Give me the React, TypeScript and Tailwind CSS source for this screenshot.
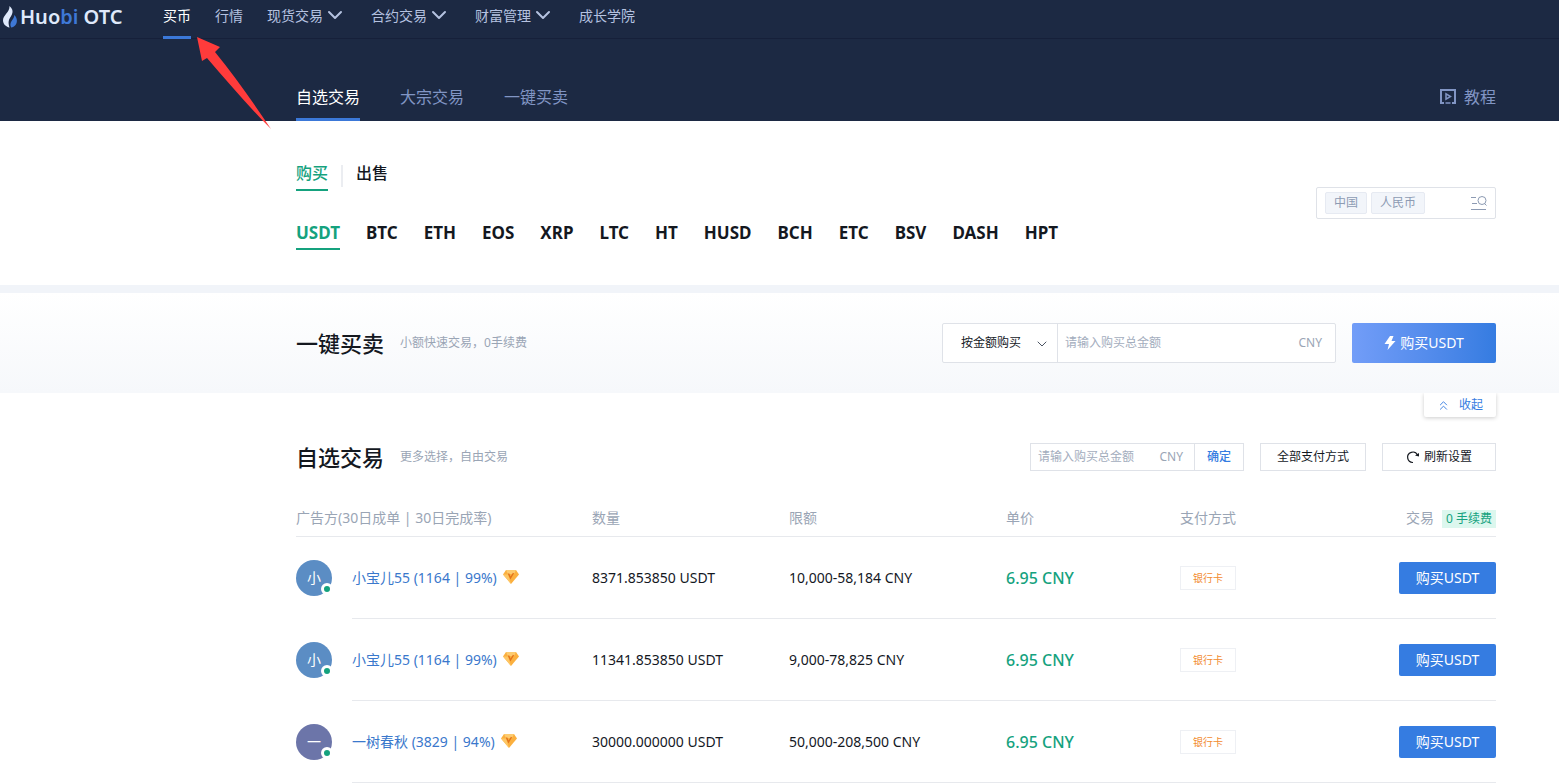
import { ChevronDown, ChevronsUp } from "lucide-react"

const mainNav = [
  { label: "买币", active: true },
  { label: "行情" },
  { label: "现货交易", menu: true },
  { label: "合约交易", menu: true },
  { label: "财富管理", menu: true },
  { label: "成长学院" },
]

const coins = ["USDT", "BTC", "ETH", "EOS", "XRP", "LTC", "HT", "HUSD", "BCH", "ETC", "BSV", "DASH", "HPT"]

const offers = [
  { id: 1, initial: "小", color: "bg-[#5b8dc4]", name: "小宝儿55 (1164 | 99%)", amount: "8371.853850 USDT", limit: "10,000-58,184 CNY", price: "6.95 CNY" },
  { id: 2, initial: "小", color: "bg-[#5b8dc4]", name: "小宝儿55 (1164 | 99%)", amount: "11341.853850 USDT", limit: "9,000-78,825 CNY", price: "6.95 CNY" },
  { id: 3, initial: "一", color: "bg-[#6c75a9]", name: "一树春秋 (3829 | 94%)", amount: "30000.000000 USDT", limit: "50,000-208,500 CNY", price: "6.95 CNY" },
]

const Logo = () => (
  <a href="#" className="flex w-[163px] items-center gap-[3px] pb-1 pl-[3px]" aria-label="Huobi OTC">
    <svg width="14" height="22" viewBox="0 0 14 22" aria-hidden="true">
      <path d="M6.500 0C9.500 2.500 10.300 5.200 9 8.200 7.800 11 5.800 12.800 5.600 16c-.1 2.200.4 4.200 1 5.600C2.600 20.800 0 18 0 14.300 0 9 6.800 6.500 6.500 0Z" fill="#dfe9fb" />
      <path d="M11.300 9c1.700 1.600 2.600 3.600 2.600 5.700 0 3.500-2.200 6.100-5.700 6.900-1.300-2.500-1-4.900.7-7.200 1.300-1.700 2.400-3.200 2.400-5.400Z" fill="#3e78d6" />
    </svg>
    <span className="text-xl leading-6 font-semibold whitespace-nowrap text-[#dfe9fb]">
      Huo<span className="text-[#3e78d6]">bi</span> OTC
    </span>
  </a>
)

const Header = () => (
  <header className="bg-[#1c2943]">
    <div className="flex h-[39px] border-b border-[#16203a]">
      <Logo />
      <nav className="flex gap-6 text-sm leading-8 text-[#b5c2e0]">
        {mainNav.map((item) => (
          <a
            key={item.label}
            href="#"
            className={item.active ? "h-[39px] border-b-3 border-[#3b78d8] text-white" : "flex"}
          >
            {item.label}
            {item.menu && <ChevronDown size={24} className="mt-[3px]" />}
          </a>
        ))}
      </nav>
    </div>
    <div className="flex h-[82px] items-end justify-between pr-[63px] pl-[296px] text-base leading-6 text-[#8195c4]">
      <nav className="flex gap-10">
        <a href="#" className="border-b-3 border-[#3b78d8] pb-[9px] text-white">自选交易</a>
        <a href="#" className="pb-3">大宗交易</a>
        <a href="#" className="pb-3">一键买卖</a>
      </nav>
      <a href="#" className="flex items-center gap-2 pb-3">
        <svg width="16" height="16" viewBox="0 0 16 16" fill="none" aria-hidden="true">
          <path d="M4 14H1V1h14v13h-3" stroke="currentColor" strokeWidth="2" />
          <path d="M5.500 14h5" stroke="currentColor" strokeWidth="1.500" />
          <path d="M6 4.800v5.400L10.500 7.500Z" stroke="currentColor" strokeWidth="1.500" />
        </svg>
        教程
      </a>
    </div>
  </header>
)

const CoinPicker = () => (
  <section className="flex h-[164px] items-start justify-between pt-10 pr-[63px] pl-[296px]">
    <div className="flex flex-col gap-[30px]">
      <div className="flex items-start text-base leading-6 font-medium">
        <button className="border-b-2 border-[#15a27e] pb-1 text-[#15a27e]">购买</button>
        <span className="mx-[13px] mt-1 h-[22px] w-0.5 bg-[#ebedf1]" />
        <button>出售</button>
      </div>
      <div className="flex gap-[26px] text-[17px] leading-6 font-bold">
        {coins.map((coin, i) => (
          <button key={coin} className={i === 0 ? "border-b-2 border-[#15a27e] pb-[3px] text-[#15a27e]" : "pb-[5px]"}>
            {coin}
          </button>
        ))}
      </div>
    </div>
    <button className="mt-[26px] flex h-8 w-[180px] items-center gap-1 rounded-xs border border-[#dfe2e8] px-2 text-xs text-[#8d9bb3]">
      <span className="rounded-xs border border-[#e6eaf2] bg-[#f2f5fa] px-2 leading-5">中国</span>
      <span className="rounded-xs border border-[#e6eaf2] bg-[#f2f5fa] px-2 leading-5">人民币</span>
      <svg width="16" height="16" viewBox="0 0 16 16" fill="none" stroke="#8d9bb3" className="ml-auto" aria-hidden="true">
        <path d="M0 2.500h5M1 8.500h5M0 14.500h15M13.500 8.500l2 2" />
        <circle cx="11" cy="5.500" r="4" />
      </svg>
    </button>
  </section>
)

const QuickTrade = () => (
  <section className="flex h-[108px] items-center justify-between border-t-8 border-[#f1f4f9] bg-linear-to-b from-white to-[#f6f8fb] pr-[63px] pl-[296px]">
    <div className="flex items-center gap-4">
      <h2 className="text-[22px] leading-8 font-medium">一键买卖</h2>
      <span className="text-xs text-[#9aa5b5]">小额快速交易，0手续费</span>
    </div>
    <div className="flex items-center gap-4 text-xs">
      <div className="flex h-10 w-[394px] rounded-xs border border-[#dfe2e8] bg-white">
        <div className="relative flex w-[115px] border-r border-[#dfe2e8]">
          <select aria-label="购买方式" className="w-full appearance-none bg-transparent pl-[18px] outline-none">
            <option>按金额购买</option>
          </select>
          <ChevronDown size={16} strokeWidth={1.5} className="pointer-events-none absolute top-3 right-[7px] text-[#4c5563]" />
        </div>
        <input aria-label="购买总金额" placeholder="请输入购买总金额" className="min-w-0 flex-1 px-[7px] outline-none placeholder:text-[#a3adbd]" />
        <span className="self-center pr-[13px] text-[#9aa5b5]">CNY</span>
      </div>
      <button className="flex h-10 w-36 items-center justify-center gap-1 rounded-xs bg-linear-to-r from-[#729df8] to-[#357ce1] text-sm text-white">
        <svg width="12" height="14" viewBox="0 0 12 14" fill="currentColor" aria-hidden="true">
          <path d="M6 0 .5 8H5l-1.500 6L11.500 5H7.500L9.500 0Z" />
        </svg>
        购买USDT
      </button>
    </div>
  </section>
)

const VipBadge = () => (
  <svg width="16" height="14" viewBox="0 0 16 14" className="mb-0.5" aria-label="V">
    <path d="M3 0h10l3 4.500L8 14 0 4.500Z" fill="#fbb03f" />
    <path d="M3 0h10L11 4H5Z" fill="#fdcb70" />
    <path d="M0 4.500h5L8 14Z" fill="#fdc767" />
    <path d="M5.500 3.500 7.500 8 10.500 3" fill="none" stroke="#e2731c" strokeWidth="1.400" />
  </svg>
)

const Offers = () => (
  <section className="pr-[63px] pl-[296px]">
    <div className="flex justify-end">
      <button className="flex h-6 w-[72px] items-center gap-2 rounded-b-xs bg-white pl-3 text-xs text-[#357ce1] shadow-[0_1px_4px_rgba(0,0,0,0.2)] [clip-path:inset(0_-6px_-6px_-6px)]">
        <ChevronsUp size={15} strokeWidth={1.5} />
        收起
      </button>
    </div>
    <div className="mt-6 flex h-8 items-center justify-between">
      <div className="flex items-center gap-4">
        <h2 className="text-[22px] leading-8 font-medium">自选交易</h2>
        <span className="text-xs text-[#9aa5b5]">更多选择，自由交易</span>
      </div>
      <div className="flex gap-4 text-xs">
        <div className="flex h-7 w-[214px] items-stretch border border-[#dfe2e8]">
          <input aria-label="筛选金额" placeholder="请输入购买总金额" className="min-w-0 flex-1 px-[7px] outline-none placeholder:text-[#a3adbd]" />
          <span className="self-center pr-[11px] text-[#9aa5b5]">CNY</span>
          <button className="w-[49px] border-l border-[#dfe2e8] font-medium text-[#357ce1]">确定</button>
        </div>
        <button className="h-7 w-[106px] border border-[#dfe2e8]">全部支付方式</button>
        <button className="flex h-7 w-[114px] items-center justify-center gap-1 border border-[#dfe2e8]">
          <svg width="14" height="14" viewBox="0 0 14 14" fill="none" stroke="currentColor" aria-hidden="true">
            <path d="M7 12.500A5.200 5.200 0 1 1 11.500 5" strokeWidth="1.200" />
            <path d="M9 5.500 13 3v3.500Z" fill="currentColor" stroke="none" />
          </svg>
          刷新设置
        </button>
      </div>
    </div>
    <table className="mt-[27px] w-full table-fixed text-left text-sm">
      <colgroup>
        <col className="w-14" />
        <col className="w-60" />
        <col className="w-[197px]" />
        <col className="w-[217px]" />
        <col className="w-[174px]" />
        <col />
      </colgroup>
      <thead>
        <tr className="h-9 border-b border-[#e7e9ed] text-[#9aa5b5] *:font-normal">
          <th colSpan={2}>广告方(30日成单 | 30日完成率)</th>
          <th>数量</th>
          <th>限额</th>
          <th>单价</th>
          <th>支付方式</th>
          <th className="text-right">
            交易
            <span className="ml-2 inline-block bg-[#dcf7ee] px-1 text-xs leading-[18px] text-[#15a27e]">0 手续费</span>
          </th>
        </tr>
      </thead>
      <tbody>
        {offers.map((offer) => (
          <tr key={offer.id} className="h-[82px] *:border-b *:border-[#e7e9ed] *:pt-0.5 *:first:border-b-0">
            <td>
              <div className={`relative flex size-9 items-center justify-center rounded-full text-white ${offer.color}`}>
                {offer.initial}
                <span className="absolute -right-px bottom-px size-3 rounded-full border-3 border-white bg-[#15a27e]" />
              </div>
            </td>
            <td>
              <a href="#" className="flex items-center gap-1.5 text-[#3a78cc]">
                {offer.name}
                <VipBadge />
              </a>
            </td>
            <td>{offer.amount}</td>
            <td>{offer.limit}</td>
            <td className="text-base font-medium text-[#15a27e]">{offer.price}</td>
            <td>
              <span className="inline-block w-14 border border-[#eef0f4] text-center text-[10px] leading-[22px] text-[#f28b30]">银行卡</span>
            </td>
            <td className="text-right">
              <button className="h-8 w-[97px] rounded-xs bg-[#357ce1] text-white">购买USDT</button>
            </td>
          </tr>
        ))}
      </tbody>
    </table>
  </section>
)

const App = () => {
  return (
    <div className="relative overflow-x-hidden bg-white font-['Noto_Sans','Noto_Sans_CJK_SC',sans-serif] text-[#14181f]">
      <Header />
      <main>
        <CoinPicker />
        <QuickTrade />
        <Offers />
      </main>
      {/* pointer to the buy entry */}
      <svg className="pointer-events-none absolute top-9 left-[196px]" width="76" height="94" viewBox="0 0 76 94" aria-hidden="true">
        <path d="M1 1 24 11 19 16C38 39 56 65 75 93 52 70 31 45 11 22L6 25Z" fill="#ff3b3b" />
      </svg>
    </div>
  )
}

export default App
